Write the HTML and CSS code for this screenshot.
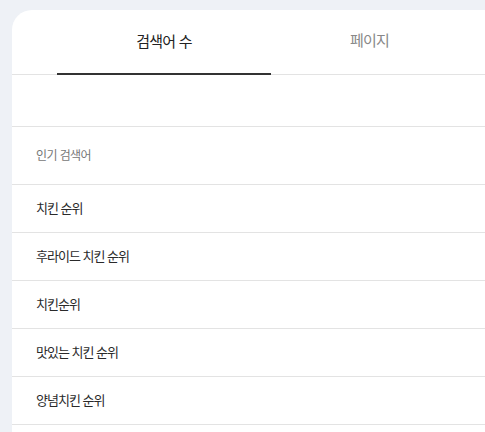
FILE: index.html
```html
<!DOCTYPE html>
<html lang="ko">
<head>
<meta charset="utf-8">
<link rel="stylesheet" href="styles.css">
</head>
<body>
<div class="card">
  <div class="tabs">
    <div class="tab tab-active">검색어 수</div>
    <div class="tab tab-second">페이지</div>
  </div>
  <div class="blank"></div>
  <div class="header">인기 검색어</div>
  <ul class="list">
    <li class="item">치킨 순위</li>
    <li class="item">후라이드 치킨 순위</li>
    <li class="item">치킨순위</li>
    <li class="item">맛있는 치킨 순위</li>
    <li class="item">양념치킨 순위</li>
  </ul>
</div>
</body>
</html>
```
FILE: styles.css
```css
html, body {
  margin: 0;
  padding: 0;
}
body {
  background: #eef1f6;
  font-family: "Noto Sans CJK KR", "Noto Sans", sans-serif;
  padding: 10px 0 0 12px;
  height: 432px;
  box-sizing: border-box;
  overflow: hidden;
}
.card {
  background: #ffffff;
  border-top-left-radius: 20px;
  height: 422px;
  overflow: hidden;
}
.tabs {
  display: flex;
  padding-left: 45px;
  height: 64px;
  border-bottom: 1px solid #e3e3e3;
}
.tab {
  display: flex;
  align-items: center;
  justify-content: center;
  font-size: 15px;
  letter-spacing: -0.8px;
  box-sizing: border-box;
}
.tab-active {
  width: 214px;
  color: #222222;
  border-bottom: 2px solid #333333;
  margin-bottom: -1px;
  padding-bottom: 3px;
}
.tab-second {
  width: 197px;
  color: #888888;
  padding-bottom: 5px;
}
.blank {
  height: 51px;
  border-bottom: 1px solid #e3e3e3;
}
.header {
  height: 58px;
  box-sizing: border-box;
  display: flex;
  align-items: center;
  padding-left: 24px;
  padding-bottom: 3px;
  font-size: 12px;
  letter-spacing: -0.6px;
  color: #777777;
  border-bottom: 1px solid #e3e3e3;
}
.list {
  list-style: none;
  margin: 0;
  padding: 0;
}
.item {
  height: 48px;
  box-sizing: border-box;
  display: flex;
  align-items: center;
  padding-left: 24px;
  padding-bottom: 3px;
  font-size: 13px;
  letter-spacing: -1px;
  color: #2a2a2a;
  border-bottom: 1px solid #e3e3e3;
}
```
